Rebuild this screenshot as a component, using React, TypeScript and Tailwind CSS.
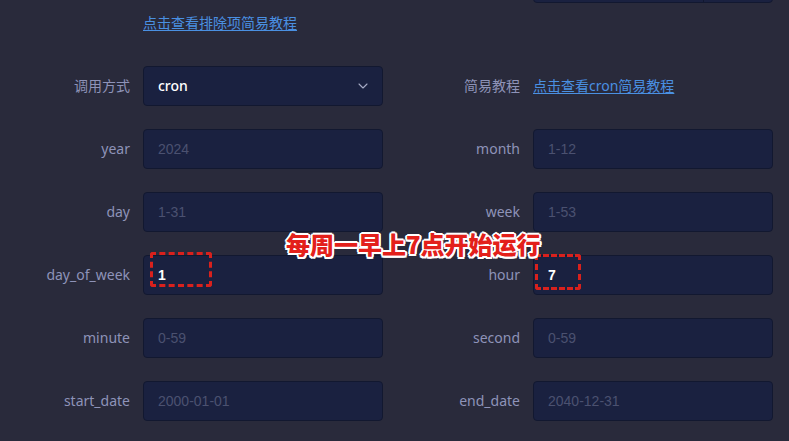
import { ChevronDown } from 'lucide-react';

const labelCls =
  'w-[130px] shrink-0 text-right text-[14px] pb-[2px] text-[#8e93b8] font-["Noto_Sans","Noto_Sans_CJK_SC",sans-serif]';
const boxCls =
  'w-[240px] h-[40px] shrink-0 rounded-[4px] border border-[#121830] bg-[#1a2140] flex items-center px-[14px] text-[14px]';

function Field({ label, placeholder, value }: { label: string; placeholder?: string; value?: string }) {
  return (
    <div className="flex items-center gap-[13px] w-[390px]">
      <span className={labelCls}>{label}</span>
      <div className={boxCls}>
        {value ? (
          <span className="text-white font-semibold font-['Liberation_Sans',sans-serif]">{value}</span>
        ) : (
          <span className="text-[#4b5170] font-['Liberation_Sans',sans-serif]">{placeholder}</span>
        )}
      </div>
    </div>
  );
}

function Row({ children, className = '' }: { children: React.ReactNode; className?: string }) {
  return <div className={`flex ${className}`}>{children}</div>;
}

export default function App() {
  return (
    <div className="relative w-[789px] h-[441px] overflow-hidden bg-[#292a3b] font-['Noto_Sans','Noto_Sans_CJK_SC',sans-serif]">
      <div className="flex flex-col">
        {/* 上一行（被截断） */}
        <Row className="mt-[-37px] h-[40px]">
          <div className="w-[390px]" />
          <div className="flex items-center gap-[13px] w-[390px]">
            <span className="w-[130px]" />
            <div className="w-[240px] h-[40px] rounded-[4px] border border-[#121830] bg-[#1a2140] flex">
              <div className="w-[170px] border-r border-[#121830]" />
            </div>
          </div>
        </Row>

        {/* 排除项链接 */}
        <Row className="h-[40px] items-center">
          <div className="pl-[143px] pb-[2px]">
            <a className="text-[14px] text-[#4a90e2] underline underline-offset-2 font-['Noto_Sans_CJK_SC',sans-serif]">
              点击查看排除项简易教程
            </a>
          </div>
        </Row>

        {/* 调用方式 */}
        <Row className="mt-[23px]">
          <div className="flex items-center gap-[13px] w-[390px]">
            <span className={labelCls}>调用方式</span>
            <div className={`${boxCls} justify-between pr-[11px]`}>
              <span className="text-white font-medium pb-[1px]">cron</span>
              <ChevronDown className="w-[16px] h-[16px] text-[#a7acc6]" strokeWidth={1.6} />
            </div>
          </div>
          <div className="flex items-center gap-[13px] w-[390px]">
            <span className={labelCls}>简易教程</span>
            <a className="text-[14px] pb-[2px] text-[#4a90e2] underline underline-offset-2">点击查看cron简易教程</a>
          </div>
        </Row>

        <Row className="mt-[23px]">
          <Field label="year" placeholder="2024" />
          <Field label="month" placeholder="1-12" />
        </Row>
        <Row className="mt-[23px]">
          <Field label="day" placeholder="1-31" />
          <Field label="week" placeholder="1-53" />
        </Row>
        <Row className="mt-[23px]">
          <Field label="day_of_week" value="1" />
          <Field label="hour" value="7" />
        </Row>
        <Row className="mt-[23px]">
          <Field label="minute" placeholder="0-59" />
          <Field label="second" placeholder="0-59" />
        </Row>
        <Row className="mt-[23px]">
          <Field label="start_date" placeholder="2000-01-01" />
          <Field label="end_date" placeholder="2040-12-31" />
        </Row>
      </div>

      {/* 标注 */}
      <div className="absolute left-[150px] top-[252px] w-[62px] h-[35px] rounded-[3px] border-[3px] border-dashed border-[#d9211d]" />
      <div className="absolute left-[535px] top-[254px] w-[46px] h-[36px] rounded-[3px] border-[3px] border-dashed border-[#d9211d]" />
      <div className="absolute left-[286px] top-[229px] text-[24px] leading-[30px] font-black text-[#e3201b] font-['Noto_Sans_CJK_SC',sans-serif] [text-shadow:2px_0_0_#fff,-2px_0_0_#fff,0_2px_0_#fff,0_-2px_0_#fff,1.5px_1.5px_0_#fff,-1.5px_-1.5px_0_#fff,1.5px_-1.5px_0_#fff,-1.5px_1.5px_0_#fff]">
        每周一早上7点开始运行
      </div>
    </div>
  );
}
